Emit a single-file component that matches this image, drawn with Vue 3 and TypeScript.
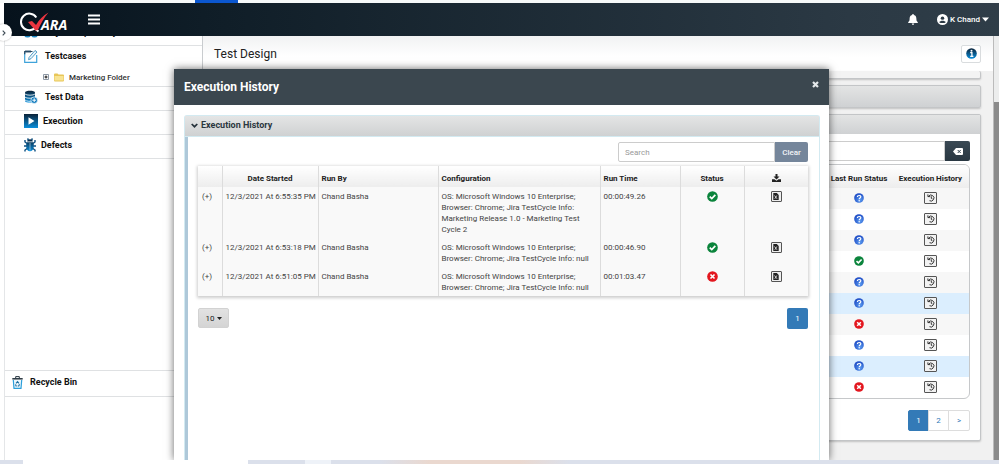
<script setup lang="ts">
import { ref } from 'vue'

type Status = 'pass' | 'fail' | 'unknown'

interface Run {
  started: string
  by: string
  config: string
  time: string
  status: Status
}

const runs: Run[] = [
  {
    started: '12/3/2021 At 6:55:35 PM',
    by: 'Chand Basha',
    config: 'OS: Microsoft Windows 10 Enterprise; Browser: Chrome; Jira TestCycle Info: Marketing Release 1.0 - Marketing Test Cycle 2',
    time: '00:00:49.26',
    status: 'pass',
  },
  {
    started: '12/3/2021 At 6:53:18 PM',
    by: 'Chand Basha',
    config: 'OS: Microsoft Windows 10 Enterprise; Browser: Chrome; Jira TestCycle Info: null',
    time: '00:00:46.90',
    status: 'pass',
  },
  {
    started: '12/3/2021 At 6:51:05 PM',
    by: 'Chand Basha',
    config: 'OS: Microsoft Windows 10 Enterprise; Browser: Chrome; Jira TestCycle Info: null',
    time: '00:01:03.47',
    status: 'fail',
  },
]

interface TestRow {
  status: Status
  selected: boolean
}

const tests: TestRow[] = [
  { status: 'unknown', selected: false },
  { status: 'unknown', selected: false },
  { status: 'unknown', selected: false },
  { status: 'pass', selected: false },
  { status: 'unknown', selected: false },
  { status: 'unknown', selected: true },
  { status: 'fail', selected: false },
  { status: 'unknown', selected: false },
  { status: 'unknown', selected: true },
  { status: 'fail', selected: false },
]

const search = ref('')
const testSearch = ref('')
</script>

<template>
  <div class="page">
    <svg class="defs" width="0" height="0" aria-hidden="true">
      <defs>
        <linearGradient id="blue" x1="0" y1="0" x2="0" y2="1">
          <stop offset="0" stop-color="#0b2238" />
          <stop offset="1" stop-color="#0a8fdc" />
        </linearGradient>
        <radialGradient id="orb" cx=".6" cy=".7" r=".7">
          <stop offset="0" stop-color="#5b9cf0" />
          <stop offset="1" stop-color="#1c49c4" />
        </radialGradient>
      </defs>
      <symbol id="s-pass" viewBox="0 0 12 12">
        <circle cx="6" cy="6" r="5.8" fill="#0b843c" />
        <path d="M3 6.2 5.2 8.3 9.1 4.2" fill="none" stroke="#fff" stroke-width="1.9" />
      </symbol>
      <symbol id="s-fail" viewBox="0 0 12 12">
        <circle cx="6" cy="6" r="5.8" fill="#e3171f" />
        <path d="M3.8 3.8 8.2 8.2M8.2 3.8 3.8 8.2" stroke="#fff" stroke-width="1.8" />
      </symbol>
      <symbol id="s-unknown" viewBox="0 0 12 12">
        <circle cx="6" cy="6" r="5.8" fill="url(#orb)" />
        <path d="M4 4.7C4 2.4 8.2 2.4 8.2 4.6 8.2 6 6.2 6 6.2 7.5" fill="none" stroke="#fff" stroke-width="1.4" />
        <circle cx="6.2" cy="9.2" r=".9" fill="#fff" />
      </symbol>
    </svg>

    <div class="tabstrip"><span class="tab-accent"></span></div>

    <header class="navbar">
      <a class="brand" href="#" aria-label="Qvara">
        <svg width="54" height="22" viewBox="0 0 54 22">
          <path d="M17.300 6.500A8.300 8.300 0 1 0 17.500 15M14.500 16.500 19.500 20.500" fill="none" stroke="#fff" stroke-width="2" />
          <path d="M9 11 13 10 17 14C20 9 24 4.500 29.500 1.500 25 6.500 21.500 13 19 19L16.500 19.500Z" fill="#ec3540" />
          <text x="22" y="19" class="brand-text">ARA</text>
        </svg>
      </a>
      <button class="bare burger" aria-label="Toggle menu">
        <svg width="12" height="11" viewBox="0 0 12 11"><path d="M0 1.500H12M0 5.500H12M0 9.500H12" stroke="#fff" stroke-width="2" /></svg>
      </button>
      <button class="bare bell" aria-label="Notifications">
        <svg width="10" height="11" viewBox="0 0 10 11"><path d="M5 0C5.600 0 5.800.4 5.800 1 8 1.500 8.400 3.200 8.400 5 8.400 6.800 9 7.400 9.800 8.200V9H.2V8.200C1 7.400 1.600 6.800 1.600 5 1.600 3.200 2 1.500 4.200 1 4.200.4 4.400 0 5 0ZM3.800 9.600H6.200C6.200 11.300 3.800 11.300 3.800 9.600Z" fill="#fff" /></svg>
      </button>
      <button class="bare user">
        <svg width="11" height="11" viewBox="0 0 12 12">
          <circle cx="6" cy="6" r="6" fill="#fff" />
          <circle cx="6" cy="4.500" r="1.900" fill="#2a3843" />
          <path d="M2.500 8.900C3.300 6.700 8.700 6.700 9.500 8.900 8 10.300 4 10.300 2.500 8.900Z" fill="#2a3843" />
        </svg>
        <span>K Chand</span>
        <svg width="7" height="5" viewBox="0 0 7 5"><path d="M0 .5H7L3.500 4.500Z" fill="#fff" /></svg>
      </button>
    </header>

    <div class="body">
      <nav class="sidebar">
        <a class="item first" href="#">
          <svg class="ico" width="14" height="14" viewBox="0 0 14 14"><circle cx="3.500" cy="9" r="2.800" fill="none" stroke="#1b87c4" stroke-width="1.500" /><circle cx="10.500" cy="9" r="2.800" fill="none" stroke="#1b87c4" stroke-width="1.500" /></svg>
          <span>Object Repository</span>
        </a>
        <div class="group">
          <a class="item cases" href="#">
            <svg class="ico" width="14" height="14" viewBox="0 0 14 14">
              <path d="M.7 3.500V13.300H12.700V6" fill="none" stroke="#3fa3da" stroke-width="1.200" />
              <path d="M.7 5.300V2.500H8.500" fill="none" stroke="#274b66" stroke-width="1.200" />
              <path d="M2 1V4M4 1V4M6 1V4" stroke="#274b66" stroke-width=".9" />
              <path d="M5 8.500 11 1.500 13 3 7 9.700 4.600 10.700Z" fill="#e9f5fc" stroke="#2d86b8" stroke-width=".8" />
            </svg>
            <span>Testcases</span>
          </a>
          <a class="sub" href="#">
            <svg width="6" height="6" viewBox="0 0 6 6"><path d="M.5.5H5.500V5.500H.5Z" fill="#fff" stroke="#8d98a5" /><path d="M1.500 3H4.500M3 1.500V4.500" stroke="#111" /></svg>
            <svg width="10" height="9" viewBox="0 0 10 9"><path d="M0 1.500Q0 .5 1 .5H3.500L4.500 1.500H9Q10 1.500 10 2.500V7.500Q10 8.500 9 8.500H1Q0 8.500 0 7.500Z" fill="#e8c658" /><path d="M.5 3H9.500V7.500H.5Z" fill="#f8e493" /></svg>
            <span>Marketing Folder</span>
          </a>
        </div>
        <a class="item" href="#">
          <svg class="ico" width="14" height="14" viewBox="0 0 14 14">
            <path d="M1 2.300C1 .2 11 .2 11 2.300V11C11 13 1 13 1 11Z" fill="url(#blue)" />
            <path d="M1 4C2.500 5.600 9.500 5.600 11 4M1 7.200C2.500 8.600 9.500 8.600 11 7.200M1 10C2.500 11.500 7 11.500 8 11" fill="none" stroke="#fff" stroke-width=".8" />
            <circle cx="10.200" cy="10.200" r="3.300" fill="#0c79bd" stroke="#fff" stroke-width=".7" />
            <path d="M8.300 10.200H12.100M10.200 8.300V12.100" stroke="#fff" />
          </svg>
          <span>Test Data</span>
        </a>
        <a class="item tight" href="#">
          <svg class="ico" width="14" height="14" viewBox="0 0 14 14"><path d="M0 0H14V14H0Z" fill="url(#blue)" /><path d="M4.500 3.300 10.500 7 4.500 10.700Z" fill="#fff" /></svg>
          <span>Execution</span>
        </a>
        <a class="item tight" href="#">
          <svg class="ico" width="12" height="14" viewBox="0 0 12 14">
            <path d="M3.200 3.500C3.200.6 8.800.6 8.800 3.500ZM2.700 4.200H9.300C10.500 7.500 10 13 6 13.300 2 13 1.500 7.500 2.700 4.200Z" fill="url(#blue)" />
            <path d="M3 5.500 1 4V2M2.700 8H0M3.200 10.500 1 12V13.500M9 5.500 11 4V2M9.300 8H12M8.800 10.500 11 12V13.500M4.500 2 3.500.5M7.500 2 8.500.5" fill="none" stroke="#0d4f80" stroke-width="1.400" />
            <path d="M6 5V12.500" stroke="#fff" stroke-width=".5" />
          </svg>
          <span>Defects</span>
        </a>
        <a class="item recycle" href="#">
          <svg class="ico" width="11" height="13" viewBox="0 0 11 13">
            <path d="M.3 2.800H10.700" stroke="#26343f" stroke-width="1.500" />
            <path d="M3.700 2.200V.6H7.300V2.200" fill="none" stroke="#26343f" />
            <path d="M1.300 4 2 12.400H9L9.700 4" fill="#eef8fd" stroke="#2b9fdb" stroke-width="1.200" />
            <path d="M4 7.300 5.500 5.500 7 7.300M7.500 8.300 6.800 10H5.700M4.800 10H4L3.500 8.400" fill="none" stroke="#1b6fa3" stroke-width="1.100" />
          </svg>
          <span>Recycle Bin</span>
        </a>
      </nav>

      <main class="main">
        <div class="titlebar">
          <h1>Test Design</h1>
          <button class="info" aria-label="Information">
            <svg width="11" height="11" viewBox="0 0 11 11"><circle cx="5.500" cy="5.500" r="5.300" fill="url(#blue)" /><path d="M4.200 4.700H5.900V8.300M4.200 8.300H7.400" fill="none" stroke="#fff" stroke-width="1.300" /><circle cx="5.500" cy="2.700" r="1" fill="#fff" /></svg>
          </button>
        </div>
        <div class="content">
          <section class="card card-tail"></section>
          <section class="card card-closed"></section>
          <section class="card">
            <div class="card-head"></div>
            <div class="card-body">
              <div class="searchrow">
                <input v-model="testSearch" type="text" aria-label="Search testcases" />
                <button class="erase" aria-label="Clear search">
                  <svg width="10" height="7" viewBox="0 0 10 7"><path d="M3 0H9Q10 0 10 1V6Q10 7 9 7H3L0 3.500Z" fill="#fff" /><path d="M4.700 2 7.700 5M7.700 2 4.700 5" stroke="#33434f" /></svg>
                </button>
              </div>
              <div class="tests-wrap">
                <table class="tests">
                  <thead>
                    <tr><th class="c-rest"></th><th class="c-status">Last Run Status</th><th class="c-hist">Execution History</th></tr>
                  </thead>
                  <tbody>
                    <tr v-for="(t, i) in tests" :key="i" :class="{ selected: t.selected }">
                      <td></td>
                      <td><svg width="10" height="10"><use :href="'#s-' + t.status" /></svg></td>
                      <td>
                        <button class="hist" aria-label="Show execution history">
                          <svg width="8" height="8" viewBox="0 0 8 8"><path d="M1.500 2.300A3 3 0 1 1 2.500 6.700M.9.400V2.600H3.200M4.300 2.300V4.300L5.500 5" fill="none" stroke="#222" stroke-width=".9" /></svg>
                        </button>
                      </td>
                    </tr>
                  </tbody>
                </table>
              </div>
              <div class="pager">
                <button class="on">1</button><button>2</button><button>&gt;</button>
              </div>
            </div>
          </section>
        </div>
      </main>
      <div class="scroll"><div class="thumb"></div></div>
    </div>

    <div class="taskbar"><span class="task-window"></span><span class="task-mid"></span></div>

    <button class="expander" aria-label="Expand panel">
      <svg width="4" height="6" viewBox="0 0 4 6"><path d="M.7.700 3 3 .7 5.300" fill="none" stroke="#3f4c56" stroke-width="1.100" /></svg>
    </button>

    <div class="modal" role="dialog" aria-label="Execution History">
      <div class="modal-head">
        <h2>Execution History</h2>
        <button class="bare close" aria-label="Close">
          <svg width="7" height="7" viewBox="0 0 7 7"><path d="M1 1 6 6M6 1 1 6" stroke="#e4e8ea" stroke-width="2.200" /></svg>
        </button>
      </div>
      <div class="modal-body">
        <section class="panel">
          <h3>
            <svg width="7" height="5" viewBox="0 0 7 5"><path d="M.7 1 3.500 3.700 6.300 1" fill="none" stroke="#26323b" stroke-width="1.700" /></svg>
            Execution History
          </h3>
          <div class="panel-body">
            <div class="find">
              <input v-model="search" type="text" placeholder="Search" aria-label="Search" />
              <button @click="search = ''">Clear</button>
            </div>
            <table class="runs">
              <thead>
                <tr>
                  <th class="r-exp"></th>
                  <th class="r-date">Date Started</th>
                  <th class="r-by">Run By</th>
                  <th class="r-conf">Configuration</th>
                  <th class="r-time">Run Time</th>
                  <th class="r-stat">Status</th>
                  <th class="r-down">
                    <svg width="9" height="8" viewBox="0 0 9 8"><path d="M3.500 0H5.500V2.500H7.500L4.500 5.500 1.500 2.500H3.500ZM0 5.300H2.500L4.500 6.700 6.500 5.300H9V8H0Z" fill="#222" /></svg>
                  </th>
                </tr>
              </thead>
              <tbody>
                <tr v-for="r in runs" :key="r.started">
                  <td class="exp">(+)</td>
                  <td class="mid">{{ r.started }}</td>
                  <td>{{ r.by }}</td>
                  <td>{{ r.config }}</td>
                  <td>{{ r.time }}</td>
                  <td class="mid"><svg width="11" height="11"><use :href="'#s-' + r.status" /></svg></td>
                  <td class="mid">
                    <button class="file" aria-label="Download report">
                      <svg width="6" height="7" viewBox="0 0 6 7"><path d="M.3 0H3.800L5.700 1.900V7H.3Z" fill="#222" /><path d="M1.500 2.500 4 5.800M3.800 2.500 1.800 5.800" stroke="#eee" stroke-width=".8" /></svg>
                    </button>
                  </td>
                </tr>
              </tbody>
            </table>
            <div class="foot">
              <button class="size">10 <svg width="5" height="3" viewBox="0 0 5 3"><path d="M0 0H5L2.500 3Z" fill="#222" /></svg></button>
              <button class="pageno">1</button>
            </div>
          </div>
        </section>
      </div>
    </div>
  </div>
</template>

<style>
body {
  margin: 0;
  overflow: hidden;
}
</style>

<style scoped>
* {
  box-sizing: border-box;
}
.page {
  position: relative;
  display: flex;
  flex-direction: column;
  height: 100vh;
  overflow: hidden;
  background: #fff;
  color: #222;
  font: 8px/11px Roboto, "Noto Sans", sans-serif;
}
.defs {
  position: absolute;
}
svg {
  display: block;
  flex: none;
}
button,
input {
  font: inherit;
  color: inherit;
  margin: 0;
  padding: 0;
}
a {
  color: inherit;
  text-decoration: none;
}
h1,
h2,
h3 {
  margin: 0;
}
.bare {
  border: 0;
  background: none;
}
.tabstrip {
  flex: none;
  height: 3px;
  padding-left: 195px;
  background: #f6f9f9;
}
.tab-accent {
  display: block;
  width: 43px;
  height: 3px;
  background: #0b57d0;
}
.navbar {
  position: relative;
  flex: none;
  display: flex;
  align-items: center;
  height: 33px;
  margin-left: 4px;
  padding: 0 10px 0 15px;
  background: linear-gradient(90deg, #06121c, #0f1d27 20%, #2b3944 85%, #2f3d48);
}
.brand {
  margin-top: 4px;
}
.brand-text {
  font: italic 700 14px "Noto Sans", sans-serif;
  fill: #fff;
}
.burger {
  margin-left: 15px;
}
.bell {
  margin-left: auto;
}
.user {
  display: flex;
  align-items: center;
  gap: 2px;
  margin-left: 19px;
  color: #fff;
  font-weight: 500;
}
.body {
  flex: 1;
  display: flex;
  min-height: 0;
  padding-left: 4px;
}
.sidebar {
  flex: none;
  width: 198px;
  overflow: hidden;
  border-left: 1px solid #e4e6e8;
  font-weight: 700;
  font-size: 9px;
}
.item {
  display: flex;
  align-items: center;
  gap: 7px;
  height: 24px;
  padding-bottom: 3px;
  padding-left: 19px;
  border-bottom: 1px solid #dfe1e3;
  color: #111;
}
.first {
  margin-top: -14px;
}
.group {
  height: 41px;
  border-bottom: 1px solid #dfe1e3;
}
.cases {
  height: 22px;
  padding-bottom: 2px;
  border: 0;
}
.tight {
  gap: 5px;
}
.sub {
  display: flex;
  align-items: center;
  gap: 5px;
  height: 18px;
  padding-left: 38px;
  color: #333;
  font-size: 8px;
  font-weight: 500;
}
.recycle {
  height: 27px;
  margin-top: 211px;
  padding-left: 7px;
  border-top: 1px solid #dfe1e3;
}
.main {
  flex: 1;
  display: flex;
  flex-direction: column;
  min-width: 0;
  border-left: 1px solid #c9cccf;
  background: #f1f1f1;
}
.titlebar {
  flex: none;
  display: flex;
  align-items: center;
  justify-content: space-between;
  height: 35px;
  padding: 0 12px 0 11px;
  background: linear-gradient(#f1f2f3, #fff 60%);
}
h1 {
  font-size: 12px;
  font-weight: 400;
  line-height: 16px;
}
.info {
  display: grid;
  place-items: center;
  width: 20px;
  height: 18px;
  border: 1px solid #d9dcde;
  border-radius: 2px;
  background: #fff;
}
.content {
  flex: 1;
  display: flex;
  flex-direction: column;
  gap: 6px;
  min-height: 0;
  padding: 0 12px 0 11px;
}
.card {
  flex: none;
  border: 1px solid #c3c5c7;
  border-radius: 2px;
  background: #fff;
  box-shadow: 0 1px 2px #0003;
}
.card-tail {
  height: 8px;
  border-top: 0;
  background: #f3f3f3;
}
.card-closed {
  height: 23px;
  background: linear-gradient(#e3e4e4, #cfd1d3);
}
.card-head {
  height: 19px;
  background: linear-gradient(#e3e4e4, #cfd1d3);
}
.card-body {
  padding: 7px 10px 9px;
}
.searchrow {
  display: flex;
  height: 20px;
}
.searchrow input {
  flex: 1;
  border: 1px solid #ccc;
}
.erase {
  display: grid;
  place-items: center;
  width: 25px;
  border: 0;
  border-radius: 0 2px 2px 0;
  background: linear-gradient(#3a4954, #293742);
}
.tests-wrap {
  margin-top: 3px;
  overflow: hidden;
  border: 1px solid #c6c8ca;
  border-radius: 6px;
}
.tests {
  width: 100%;
  border-collapse: collapse;
  table-layout: fixed;
}
.tests th {
  height: 23px;
  padding: 3px 0 0;
  background: linear-gradient(#fff, #ededed);
  font-weight: 700;
  white-space: nowrap;
}
.tests td {
  height: 21px;
  padding: 0 0 2px;
}
.tests td svg {
  margin: 0 auto;
}
.tests tbody tr:nth-child(odd) {
  background: #f7f7f7;
}
.tests tbody tr.selected {
  background: #dbeefe;
}
.c-status {
  width: 66px;
}
.c-hist {
  width: 77px;
}
.hist {
  display: grid;
  place-items: center;
  width: 13px;
  height: 12px;
  margin: 0 auto;
  border: 1px solid #555;
  border-radius: 1px;
  background: #f2f2f2;
}
.pager {
  display: flex;
  justify-content: flex-end;
  margin-top: 11px;
}
.pager button {
  width: 21px;
  height: 21px;
  margin-left: -1px;
  border: 1px solid #ddd;
  background: #fff;
  color: #337ab7;
}
.pager button:last-child {
  border-radius: 0 2px 2px 0;
  width: 22px;
}
.pager .on {
  border-color: #337ab7;
  border-radius: 2px 0 0 2px;
  background: #337ab7;
  color: #fff;
}
.scroll {
  flex: none;
  width: 6px;
  padding-top: 66px;
  border-left: 1px solid #bbb;
  background: #eceded;
}
.thumb {
  height: 100%;
  background: #8b8b8b;
}
.taskbar {
  flex: none;
  display: flex;
  height: 4px;
  background: linear-gradient(90deg, #dbe0eb 38%, #ead8cf 43%, #ead8cf 52%, #dbe0eb 57%);
}
.task-window {
  width: 225px;
  margin-left: 23px;
  background: #fff;
}
.task-mid {
  width: 26px;
  margin-left: 57px;
  background: #eef2f8;
}
.expander {
  position: absolute;
  top: 24px;
  left: -5px;
  display: grid;
  place-items: center;
  width: 17px;
  height: 17px;
  border: 0;
  border-radius: 50%;
  background: #fff;
  box-shadow: 0 0 2px #0005;
}
.modal {
  position: absolute;
  top: 69px;
  right: 170px;
  bottom: 4px;
  left: 174px;
  display: flex;
  flex-direction: column;
  background: #fff;
  box-shadow: 0 0 8px #0009;
  clip-path: inset(-12px -12px 0);
}
.modal-head {
  display: flex;
  justify-content: space-between;
  height: 36px;
  padding: 0 10px;
  background: #3b474f;
  color: #fff;
}
h2 {
  font-size: 12px;
  font-weight: 700;
  line-height: 36px;
}
.close {
  align-self: flex-start;
  padding-top: 12px;
}
.modal-body {
  flex: 1;
  display: flex;
  min-height: 0;
  padding: 10px 9px 0 10px;
}
.panel {
  flex: 1;
  display: flex;
  flex-direction: column;
  border: 1px solid #d3eaf1;
  border-bottom: 0;
  border-radius: 3px 3px 0 0;
}
h3 {
  display: flex;
  align-items: center;
  gap: 3px;
  height: 21px;
  padding-bottom: 1px;
  padding-left: 6px;
  border-bottom: 1px solid #d3eaf1;
  background: linear-gradient(#e4e5e5, #cfd1d2);
  color: #2b3740;
  font-size: 9px;
  font-weight: 700;
}
.panel-body {
  flex: 1;
  padding: 5px 11px 0 10px;
  border-left: 3px solid #aec8d9;
}
.find {
  display: flex;
  width: 190px;
  height: 20px;
  margin-left: auto;
}
.find input {
  flex: 1;
  min-width: 0;
  padding: 0 6px;
  border: 1px solid #ccc;
  border-radius: 2px 0 0 2px;
}
.find input::placeholder {
  color: #999;
}
.find button {
  width: 33px;
  border: 0;
  border-radius: 0 2px 2px 0;
  background: #75869b;
  color: #f2f4f7;
  font-weight: 500;
}
.runs {
  width: 100%;
  margin-top: 4px;
  border-collapse: collapse;
  table-layout: fixed;
  background: #f9f9f9;
  box-shadow: 0 1px 3px 1px #0003;
}
.runs th,
.runs td {
  border-left: 1px solid #dcdcdc;
  text-align: left;
}
.runs th:first-child,
.runs td:first-child {
  border-left: 0;
}
.runs th {
  height: 21px;
  padding: 3px 3px 0;
  background: linear-gradient(#fff, #ededed);
  font-weight: 700;
}
.runs td {
  padding: 4px 3px 3px;
  color: #444;
  vertical-align: top;
}
.runs .exp {
  padding-left: 4px;
}
.runs .r-date,
.runs .r-stat,
.runs .mid {
  text-align: center;
  white-space: nowrap;
}
.runs .mid svg,
.runs .r-down svg {
  margin: 0 auto;
}
.r-exp {
  width: 24px;
}
.r-date {
  width: 96px;
}
.r-by {
  width: 120px;
}
.r-time {
  width: 80px;
}
.r-stat,
.r-down {
  width: 64px;
}
.file {
  display: grid;
  place-items: center;
  width: 11px;
  height: 11px;
  margin: 0 auto;
  border: 1px solid #555;
  border-radius: 1px;
  background: #eee;
}
.foot {
  display: flex;
  justify-content: space-between;
  margin-top: 12px;
}
.size {
  display: flex;
  align-items: center;
  justify-content: center;
  gap: 2px;
  width: 31px;
  height: 20px;
  border: 1px solid #d2d2d2;
  border-radius: 2px;
  background: linear-gradient(#e2e2e2, #d4d4d4);
}
.pageno {
  width: 21px;
  height: 21px;
  border: 0;
  border-radius: 2px;
  background: #337ab7;
  color: #fff;
}
</style>
